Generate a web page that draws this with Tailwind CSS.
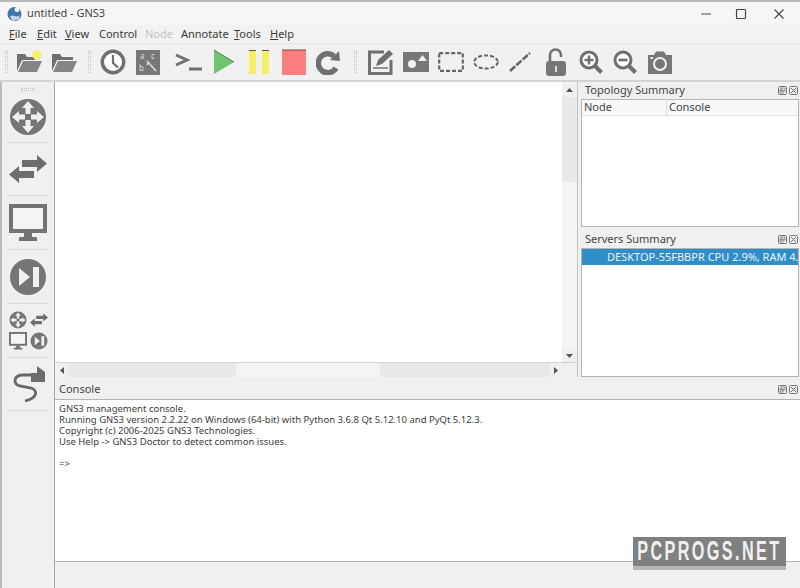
<!DOCTYPE html>
<html lang="en">
<head>
<meta charset="UTF-8">
<title>untitled - GNS3</title>
<script src="https://cdn.jsdelivr.net/npm/@tailwindcss/browser@4"></script>
</head>
<body class="w-[800px] h-[588px] overflow-hidden bg-[#f0f0f0] font-['Noto_Sans',sans-serif] text-[11px] text-[#333]">
<div class="relative flex flex-col w-[800px] h-[588px]">

  <!-- strip of the window behind -->
  <div class="h-[2px] bg-[#b9b9b9]"></div>

  <!-- title bar -->
  <div class="flex items-center h-[23px] bg-[#f6f6f6] pl-[7px]">
    <svg width="15" height="16" viewBox="0 0 15 16"><circle cx="7.5" cy="8" r="7" fill="#3f74ad"/><path d="M3 11 C6 7 9 13 13 9 L12 13 L6 15Z" fill="#c9d8e8"/><circle cx="10" cy="3.5" r="2.5" fill="#f0f0f0"/></svg>
    <span class="ml-[5px] text-[#444]">untitled - GNS3</span>
    <div class="ml-auto flex items-center text-[#444]">
      <svg width="12" height="12" viewBox="0 0 12 12" class="mr-[23px]"><path d="M1 6H11" stroke="#555" stroke-width="1"/></svg>
      <svg width="12" height="12" viewBox="0 0 12 12" class="mr-[26px]"><rect x="1.5" y="1.5" width="9" height="9" rx="1" fill="none" stroke="#444" stroke-width="1.2"/></svg>
      <svg width="12" height="12" viewBox="0 0 12 12" class="mr-[15px]"><path d="M1.5 1.5L10.5 10.5M10.5 1.5L1.5 10.5" stroke="#444" stroke-width="1.1"/></svg>
    </div>
  </div>

  <!-- menu -->
  <div class="flex items-center h-[18px] pl-[9px] bg-[#f2f2f2] text-[#3a3a3a]">
    <span class="w-[28px]"><span class="underline">F</span>ile</span>
    <span class="w-[28px]"><span class="underline">E</span>dit</span>
    <span class="w-[34px]"><span class="underline">V</span>iew</span>
    <span class="w-[46px]">Control</span>
    <span class="w-[36px] text-[#c4c4c4]">Node</span>
    <span class="w-[53px]">Annotate</span>
    <span class="w-[36px]"><span class="underline">T</span>ools</span>
    <span><span class="underline">H</span>elp</span>
  </div>

  <!-- toolbar -->
  <div class="flex items-center h-[39px] pl-[5px] bg-[#f1f1f1] border-t border-[#e6e6e6] border-b-2 border-b-[#d4d4d4]">
    <div class="w-[3px] h-[22px] mr-[4px] border-x border-dotted border-[#c4c4c4]"></div>
    <div class="flex justify-center w-[34.5px]"><svg width="28" height="24" viewBox="0 0 28 24"><path d="M2 21V4H10L12 7H20V10H7L2 21Z" fill="#707070"/><path d="M3 22L8 11H27L22 22Z" fill="#858585"/><circle cx="22" cy="5" r="4.5" fill="#f7ee6a"/></svg></div>
    <div class="flex justify-center w-[34.5px]"><svg width="28" height="24" viewBox="0 0 28 24"><path d="M2 21V4H10L12 7H23V10H7L2 21Z" fill="#707070"/><path d="M3 22L8 11H27L22 22Z" fill="#858585"/></svg></div>
    <div class="w-[3px] h-[22px] ml-[7px] mr-[5px] border-x border-dotted border-[#c4c4c4]"></div>
    <div class="flex justify-center w-[34.5px]"><svg width="26" height="26" viewBox="0 0 26 26"><circle cx="13" cy="13" r="10.7" fill="#fff" stroke="#6f6f6f" stroke-width="3.4"/><path d="M13 6V14L18 18.5" fill="none" stroke="#6f6f6f" stroke-width="2.2"/></svg></div>
    <div class="flex justify-center w-[34.5px]"><svg width="24" height="25" viewBox="0 0 24 25"><rect width="24" height="25" fill="#777"/><text x="4" y="9" font-size="8" fill="#ddd" font-family="Noto Sans">a</text><text x="15" y="9" font-size="8" fill="#ddd" font-family="Noto Sans">c</text><text x="3" y="21" font-size="8" fill="#ddd" font-family="Noto Sans">b</text><path d="M11 11L20 21M13 12L11 15" stroke="#ddd" stroke-width="1.6" fill="none"/></svg></div>
    <div class="flex justify-center w-[6px]"></div>
    <div class="flex justify-center w-[34.5px] ml-[1px]"><svg width="28" height="24" viewBox="0 0 28 24"><path d="M1 5L12 10L1 15" fill="none" stroke="#6f6f6f" stroke-width="3"/><path d="M14 19H27" stroke="#6f6f6f" stroke-width="3"/></svg></div>
    <div class="flex justify-center w-[35px]"><svg width="22" height="26" viewBox="0 0 22 26"><path d="M1 1L21 13L1 25Z" fill="#6fc56f"/><path d="M1 1L21 13" stroke="#555" stroke-width="0.8"/></svg></div>
    <div class="flex justify-center w-[35px]"><svg width="22" height="26" viewBox="0 0 22 26"><rect x="1" y="1" width="7" height="24" fill="#f8ee62"/><rect x="14" y="1" width="7" height="24" fill="#f8ee62"/><path d="M1 1.5H8M14 1.5H21" stroke="#555"/></svg></div>
    <div class="flex justify-center w-[34px]"><svg width="24" height="26" viewBox="0 0 24 26"><rect y="1" width="24" height="25" fill="#fb7f7f"/><path d="M0 1H24" stroke="#844" stroke-width="1"/></svg></div>
    <div class="flex justify-center w-[36px]"><svg width="25" height="26" viewBox="0 0 25 26"><path d="M20 19A9.5 9.5 0 1 1 18 7" fill="none" stroke="#707070" stroke-width="5.5"/><path d="M14 11L24 12L23 2Z" fill="#707070"/></svg></div>
    <div class="w-[3px] h-[22px] ml-[7px] mr-[7px] border-x border-dotted border-[#c4c4c4]"></div>
    <div class="flex justify-center w-[34.5px]"><svg width="26" height="26" viewBox="0 0 26 26"><path d="M16 3H1.5V24.5H23V11" fill="none" stroke="#707070" stroke-width="3"/><path d="M5 19H20" stroke="#707070" stroke-width="1.5"/><path d="M8 17L10 11L21 1L25 5L14 15Z" fill="#707070"/></svg></div>
    <div class="flex justify-center w-[35px]"><svg width="26" height="20" viewBox="0 0 26 20"><rect width="26" height="20" fill="#777"/><circle cx="9" cy="12" r="4" fill="#f1f1f1"/><path d="M15 9L19.5 3L24 9Z" fill="#f1f1f1"/></svg></div>
    <div class="flex justify-center w-[35px]"><svg width="26" height="20" viewBox="0 0 26 20"><rect x="1.2" y="1.2" width="23.6" height="17.6" fill="none" stroke="#666" stroke-width="2.2" stroke-dasharray="4 2"/></svg></div>
    <div class="flex justify-center w-[35px]"><svg width="26" height="16" viewBox="0 0 26 16"><ellipse cx="13" cy="8" rx="11.8" ry="6.6" fill="none" stroke="#666" stroke-width="2" stroke-dasharray="4 2"/></svg></div>
    <div class="flex justify-center w-[34.5px]"><svg width="22" height="20" viewBox="0 0 22 20"><path d="M1 19L21 1" stroke="#666" stroke-width="2.6" stroke-dasharray="7 1.5"/></svg></div>
    <div class="flex justify-center w-[36px]"><svg width="22" height="28" viewBox="0 0 22 28"><path d="M5 13V7A5.5 5.5 0 0 1 16 7V9" fill="none" stroke="#707070" stroke-width="2.6"/><rect x="1" y="13" width="20" height="15" rx="3" fill="#777"/><rect x="10" y="18" width="2" height="6" fill="#ddd"/></svg></div>
    <div class="flex justify-center w-[34px]"><svg width="24" height="25" viewBox="0 0 24 25"><circle cx="10" cy="10" r="8" fill="#fff" stroke="#6f6f6f" stroke-width="3"/><path d="M15.5 15.5L22.5 22.5" stroke="#6f6f6f" stroke-width="4"/><path d="M5.5 10H14.5M10 5.5V14.5" stroke="#6f6f6f" stroke-width="2.6"/></svg></div>
    <div class="flex justify-center w-[35px]"><svg width="24" height="25" viewBox="0 0 24 25"><circle cx="10" cy="10" r="8" fill="#fff" stroke="#6f6f6f" stroke-width="3"/><path d="M15.5 15.5L22.5 22.5" stroke="#6f6f6f" stroke-width="4"/><path d="M5.5 10H14.5" stroke="#6f6f6f" stroke-width="2.6"/></svg></div>
    <div class="flex justify-center w-[35px]"><svg width="26" height="23" viewBox="0 0 26 23"><path d="M1 4H7L9 0.5H17L19 4H25V23H1Z" fill="#777"/><circle cx="13" cy="13" r="6" fill="#777" stroke="#f1f1f1" stroke-width="2"/><rect x="3.5" y="6" width="2.5" height="2" fill="#f1f1f1"/></svg></div>
  </div>

  <!-- main area -->
  <div class="flex flex-1 min-h-0">
    <!-- left dock -->
    <div class="flex flex-col items-center w-[55px] shrink-0 border-r border-[#a8a8a8] pt-[6px] pb-[1px] border-l-2 border-l-[#bbb]">
      <div class="w-[14px] h-[3px] border-y border-dotted border-[#c4c4c4]"></div>
      <div class="flex items-center justify-center h-[52px] w-[42px] border-b border-[#dcdcdc]"><svg width="38" height="38" viewBox="0 0 38 38"><circle cx="19" cy="19" r="18" fill="#757575"/><path d="M19 3L25 10H21.5V16H16.5V10H13Z M19 35L13 28H16.5V22H21.5V28H25Z M3 19L10 13V16.5H16V21.5H10V25Z M35 19L28 25V21.5H22V16.5H28V13Z" fill="#f0f0f0"/></svg></div>
      <div class="flex items-center justify-center h-[53px] w-[42px] border-b border-[#dcdcdc]"><svg width="38" height="28" viewBox="0 0 38 28"><path d="M13 5H28V0L38 8.5L28 17V12H13Z" fill="#6d6d6d"/><path d="M25 16H10V11L0 19.5L10 28V23H25Z" fill="#6d6d6d"/></svg></div>
      <div class="flex items-center justify-center h-[54px] w-[42px] border-b border-[#dcdcdc]"><svg width="38" height="38" viewBox="0 0 38 38"><rect x="2" y="2" width="34" height="25" fill="#f4f4f4" stroke="#737373" stroke-width="4"/><path d="M15 29H23V33H28V37H10V33H15Z" fill="#737373"/></svg></div>
      <div class="flex items-center justify-center h-[54px] w-[42px] border-b border-[#dcdcdc]"><svg width="38" height="38" viewBox="0 0 38 38"><circle cx="19" cy="19" r="18" fill="#757575"/><path d="M10 10L21 19L10 28Z M24 9H30V29H24Z" fill="#f0f0f0"/></svg></div>
      <div class="flex items-center justify-center h-[54px] w-[42px] border-b border-[#dcdcdc]">
        <div class="grid grid-cols-2 gap-x-[3px] gap-y-[3px]">
          <svg width="18" height="18" viewBox="0 0 38 38"><circle cx="19" cy="19" r="18" fill="#757575"/><path d="M19 3L25 10H21.5V16H16.5V10H13Z M19 35L13 28H16.5V22H21.5V28H25Z M3 19L10 13V16.5H16V21.5H10V25Z M35 19L28 25V21.5H22V16.5H28V13Z" fill="#f0f0f0"/></svg>
          <svg width="18" height="18" viewBox="0 0 38 28"><path d="M13 5H28V0L38 8.5L28 17V12H13Z" fill="#6d6d6d"/><path d="M25 16H10V11L0 19.5L10 28V23H25Z" fill="#6d6d6d"/></svg>
          <svg width="18" height="18" viewBox="0 0 38 38"><rect x="2" y="2" width="34" height="25" fill="#f4f4f4" stroke="#737373" stroke-width="4"/><path d="M15 29H23V33H28V37H10V33H15Z" fill="#737373"/></svg>
          <svg width="18" height="18" viewBox="0 0 38 38"><circle cx="19" cy="19" r="18" fill="#757575"/><path d="M10 10L21 19L10 28Z M24 9H30V29H24Z" fill="#f0f0f0"/></svg>
        </div>
      </div>
      <div class="flex items-center justify-center h-[53px] w-[42px] border-b border-[#dcdcdc]"><svg width="34" height="38" viewBox="0 0 34 38"><path d="M22 10H12C3 10 1 19 9 21L20 23C27 25 27 33 14 36" fill="none" stroke="#666" stroke-width="2.8"/><path d="M20 8H26V1L34 7V17H20Z" fill="#6d6d6d"/></svg></div>
    </div>

    <!-- centre column -->
    <div class="flex flex-col flex-1 min-w-0">
      <div class="flex flex-1 min-h-0">
        <!-- canvas with scrollbars -->
        <div class="grid grid-cols-[1fr_15px] grid-rows-[1fr_15px] w-[523px] h-[295px] bg-white border-b border-[#c4c4c4] border-r">
          <div class="bg-white"></div>
          <div class="flex flex-col items-center bg-[#e9e9e9]">
            <div class="flex items-center justify-center w-full h-[15px] bg-[#f0f0f0] text-[#555]"><svg width="7" height="4"><path d="M0 4L3.5 0L7 4Z" fill="#555"/></svg></div>
            <div class="h-[85px]"></div>
            <div class="w-full h-[167px] bg-[#f4f4f4]"></div>
            <div class="flex-1"></div>
            <div class="flex items-center justify-center w-full h-[13px] bg-[#f0f0f0]"><svg width="7" height="4"><path d="M0 0L3.5 4L7 0Z" fill="#555"/></svg></div>
          </div>
          <div class="flex items-center bg-[#e9e9e9] border-t border-[#d4d4d4]">
            <div class="flex items-center justify-center w-[13px] h-full bg-[#f0f0f0]"><svg width="4" height="7"><path d="M4 0L0 3.5L4 7Z" fill="#555"/></svg></div>
            <div class="w-[168px]"></div>
            <div class="w-[144px] h-full bg-[#f4f4f4]"></div>
            <div class="flex-1"></div>
            <div class="flex items-center justify-center w-[12px] h-full bg-[#f0f0f0]"><svg width="4" height="7"><path d="M0 0L4 3.5L0 7Z" fill="#555"/></svg></div>
          </div>
          <div class="bg-[#f0f0f0] border-t border-[#d4d4d4]"></div>
        </div>

        <!-- right docks -->
        <div class="flex flex-col w-[222px] h-[295px] pl-[3px]">
          <div class="flex items-center justify-between h-[17px] pl-[4px] pr-[2px] text-[#444]">
            <span>Topology Summary</span>
            <span class="flex gap-[2px]">
              <svg width="9" height="9" viewBox="0 0 9 9"><rect x="0.5" y="0.5" width="8" height="8" rx="1" fill="none" stroke="#777"/><rect x="3" y="2" width="4" height="3" fill="none" stroke="#777" stroke-width="0.8"/><rect x="2" y="4" width="3" height="3" fill="none" stroke="#777" stroke-width="0.8"/></svg>
              <svg width="9" height="9" viewBox="0 0 9 9"><rect x="0.5" y="0.5" width="8" height="8" rx="1" fill="none" stroke="#777"/><path d="M2 2L7 7M7 2L2 7" stroke="#666"/></svg>
            </span>
          </div>
          <div class="h-[128px] bg-white border border-[#b4b4b4] mr-[1px]">
            <div class="flex h-[16px] items-center border-b border-[#e2e2e2] bg-[#f8f8f8] text-[#444]">
              <span class="w-[85px] pl-[2px] border-r border-[#dedede]">Node</span>
              <span class="pl-[2px]">Console</span>
            </div>
          </div>
          <div class="flex items-center justify-between h-[17px] mt-[4px] pl-[4px] pr-[2px] text-[#444]">
            <span>Servers Summary</span>
            <span class="flex gap-[2px]">
              <svg width="9" height="9" viewBox="0 0 9 9"><rect x="0.5" y="0.5" width="8" height="8" rx="1" fill="none" stroke="#777"/><rect x="3" y="2" width="4" height="3" fill="none" stroke="#777" stroke-width="0.8"/><rect x="2" y="4" width="3" height="3" fill="none" stroke="#777" stroke-width="0.8"/></svg>
              <svg width="9" height="9" viewBox="0 0 9 9"><rect x="0.5" y="0.5" width="8" height="8" rx="1" fill="none" stroke="#777"/><path d="M2 2L7 7M7 2L2 7" stroke="#666"/></svg>
            </span>
          </div>
          <div class="flex-1 bg-white border border-[#b4b4b4] mr-[1px]">
            <div class="flex items-center h-[16px] bg-[#2f8ec7] text-[#e8f3fa] pl-[20px] whitespace-nowrap">
              <svg width="13" height="13" viewBox="0 0 13 13" class="mr-[5px]"><circle cx="6.5" cy="6.5" r="6" fill="#7fc4a0"/><circle cx="6.5" cy="6" r="4" fill="#63b55a"/></svg>
              <span>DESKTOP-55FBBPR CPU 2.9%, RAM 4...</span>
            </div>
          </div>
        </div>
      </div>

      <!-- console dock -->
      <div class="flex items-center justify-between h-[19px] mt-[3px] pl-[4px] pr-[2px] text-[#444]">
        <span>Console</span>
        <span class="flex gap-[2px]">
          <svg width="9" height="9" viewBox="0 0 9 9"><rect x="0.5" y="0.5" width="8" height="8" rx="1" fill="none" stroke="#777"/><rect x="3" y="2" width="4" height="3" fill="none" stroke="#777" stroke-width="0.8"/><rect x="2" y="4" width="3" height="3" fill="none" stroke="#777" stroke-width="0.8"/></svg>
          <svg width="9" height="9" viewBox="0 0 9 9"><rect x="0.5" y="0.5" width="8" height="8" rx="1" fill="none" stroke="#777"/><path d="M2 2L7 7M7 2L2 7" stroke="#666"/></svg>
        </span>
      </div>
      <div class="h-[163px] bg-white border-t border-b border-[#b4b4b4] pl-[4px] pt-[3px] text-[9.5px] leading-[11px] text-[#3c3c3c]">
        <p>GNS3 management console.</p>
        <p>Running GNS3 version 2.2.22 on Windows (64-bit) with Python 3.6.8 Qt 5.12.10 and PyQt 5.12.3.</p>
        <p>Copyright (c) 2006-2025 GNS3 Technologies.</p>
        <p>Use Help -&gt; GNS3 Doctor to detect common issues.</p>
        <p class="mt-[11px]">=&gt;</p>
      </div>
      <div class="h-[26px]"></div>
    </div>
  </div>

  <!-- watermark -->
  <div class="absolute left-[633px] top-[537px] w-[153px] h-[33px] bg-[#808080] border-b-[4px] border-[#b6b6b6] overflow-hidden">
    <span class="block origin-left scale-x-[0.6] pl-[7px] font-['Liberation_Sans',sans-serif] font-bold text-[27px] leading-[29px] tracking-[4px] text-[#f0f0f0] whitespace-nowrap">PCPROGS.NET</span>
  </div>
</div>
</body>
</html>
